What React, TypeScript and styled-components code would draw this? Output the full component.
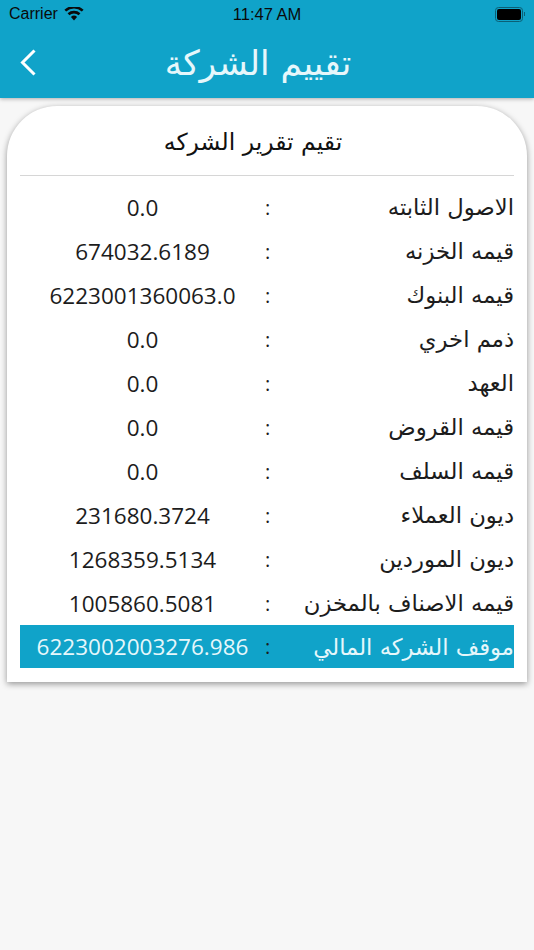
import React, { FC } from 'react';
import styled, { createGlobalStyle } from 'styled-components';

const GlobalStyle = createGlobalStyle`
    html, body {
        margin: 0;
        padding: 0;
        background-color: #f7f7f7;
    }
    body {
        font-family: "Open Sans", "DejaVu Sans", sans-serif;
    }
`;

const Page = styled.div`
    width: 534px;
    height: 950px;
    overflow: hidden;
    background-color: #f7f7f7;
`;

const Header = styled.header`
    height: 98px;
    background-color: #10a3c9;
    box-shadow: 0 1px 4px rgba(0, 0, 0, 0.3);
`;

const StatusBar = styled.div`
    height: 28px;
    display: grid;
    grid-template-columns: 1fr auto 1fr;
    align-items: center;
    padding: 0 9px;
    font-family: "Liberation Sans", Arial, sans-serif;
    font-size: 16px;
    color: #0a0a0a;
`;

const Carrier = styled.div`
    display: flex;
    align-items: center;
    gap: 6px;
`;

const Clock = styled.div`
    font-size: 16.5px;
    font-weight: 500;
`;

const BatteryBox = styled.div`
    justify-self: end;
    display: flex;
    align-items: center;
    gap: 1px;
`;

const BatteryShell = styled.div`
    width: 24px;
    height: 11px;
    padding: 1px;
    border: 1px solid #0b5f75;
    border-radius: 3.5px;
    box-sizing: content-box;
    display: flex;
`;

const BatteryFill = styled.div`
    flex: 1;
    background-color: #000;
    border-radius: 2px;
`;

const BatteryTip = styled.div`
    width: 1.5px;
    height: 4px;
    background-color: #0b5f75;
`;

const NavBar = styled.div`
    position: relative;
    height: 70px;
    display: flex;
    align-items: center;
    justify-content: center;
    padding-right: 18px;
`;

const BackButton = styled.button`
    position: absolute;
    left: 18px;
    top: 19px;
    width: 20px;
    height: 30px;
    padding: 0;
    border: none;
    background: none;
    display: flex;
    align-items: center;
`;

const Title = styled.h1`
    margin: 0;
    font-family: "DejaVu Sans", sans-serif;
    font-weight: 400;
    font-size: 34.5px;
    line-height: 42px;
    color: #e6f7fb;
    direction: rtl;
`;

const Content = styled.main`
    padding: 8px 7px 0;
`;

const Card = styled.section`
    background-color: #fff;
    border-radius: 50px 50px 0 0;
    padding: 0 13px 14px;
    box-shadow: 0 2px 6px rgba(0, 0, 0, 0.4);
`;

const CardHeading = styled.h2`
    margin: 0;
    height: 69px;
    padding: 3px 28px 0 0;
    box-sizing: border-box;
    height: 70px;
    display: flex;
    align-items: center;
    justify-content: center;
    border-bottom: 1px solid #d6d6d6;
    font-family: "DejaVu Sans", sans-serif;
    font-weight: 400;
    font-size: 23.5px;
    color: #111;
    direction: rtl;
`;

const Rows = styled.div`
    padding-top: 9px;
`;

const Row = styled.div<{ $total?: boolean }>`
    height: ${(p) => (p.$total ? 43 : 44)}px;
    display: grid;
    grid-template-columns: 245px 5px 1fr;
    align-items: center;
    background-color: ${(p) => (p.$total ? '#10a3c9' : 'transparent')};
    color: ${(p) => (p.$total ? '#e6f7fb' : '#1c1c1c')};
`;

const Value = styled.div`
    text-align: center;
    font-size: 22.5px;
`;

const Colon = styled.div`
    text-align: center;
    font-size: 20px;
    color: #1c1c1c;
`;

const Label = styled.div`
    font-family: "DejaVu Sans", sans-serif;
    font-size: 22.7px;
    text-align: right;
    direction: rtl;
    white-space: nowrap;
`;

const rows: [string, string][] = [
    ['الاصول الثابته', '0.0'],
    ['قيمه الخزنه', '674032.6189'],
    ['قيمه البنوك', '6223001360063.0'],
    ['ذمم اخري', '0.0'],
    ['العهد', '0.0'],
    ['قيمه القروض', '0.0'],
    ['قيمه السلف', '0.0'],
    ['ديون العملاء', '231680.3724'],
    ['ديون الموردين', '1268359.5134'],
    ['قيمه الاصناف بالمخزن', '1005860.5081'],
];

const App: FC = () => {
    return (
        <React.Fragment>
            <GlobalStyle />
            <Page>
                <Header>
                    <StatusBar>
                        <Carrier>
                            Carrier
                            <svg width="20" height="14" viewBox="0 0 20 14">
                                <path d="M10 13.5 L6.9 9.9 A4.8 4.8 0 0 1 13.1 9.9 Z" fill="#0a0a0a" />
                                <path d="M5.4 8.2 L3.6 6.2 A9.6 9.6 0 0 1 16.4 6.2 L14.6 8.2 A7 7 0 0 0 5.4 8.2 Z" fill="#0a0a0a" />
                                <path d="M2.2 4.6 L0.4 2.7 A14.2 14.2 0 0 1 19.6 2.7 L17.8 4.6 A11.6 11.6 0 0 0 2.2 4.6 Z" fill="#0a0a0a" />
                            </svg>
                        </Carrier>
                        <Clock>11:47 AM</Clock>
                        <BatteryBox>
                            <BatteryShell>
                                <BatteryFill />
                            </BatteryShell>
                            <BatteryTip />
                        </BatteryBox>
                    </StatusBar>
                    <NavBar>
                        <BackButton aria-label="back">
                            <svg width="20" height="30" viewBox="0 0 20 30">
                                <path d="M16.5 3.5 L4.5 15.5 L16.5 27.5" fill="none" stroke="#fff" strokeWidth="3" />
                            </svg>
                        </BackButton>
                        <Title>تقييم الشركة</Title>
                    </NavBar>
                </Header>
                <Content>
                    <Card>
                        <CardHeading>تقيم تقرير الشركه</CardHeading>
                        <Rows>
                            {rows.map(([label, value]) => (
                                <Row key={label}>
                                    <Value>{value}</Value>
                                    <Colon>:</Colon>
                                    <Label>{label}</Label>
                                </Row>
                            ))}
                            <Row $total>
                                <Value>6223002003276.986</Value>
                                <Colon>:</Colon>
                                <Label>موقف الشركه المالي</Label>
                            </Row>
                        </Rows>
                    </Card>
                </Content>
            </Page>
        </React.Fragment>
    );
};

export default App;
